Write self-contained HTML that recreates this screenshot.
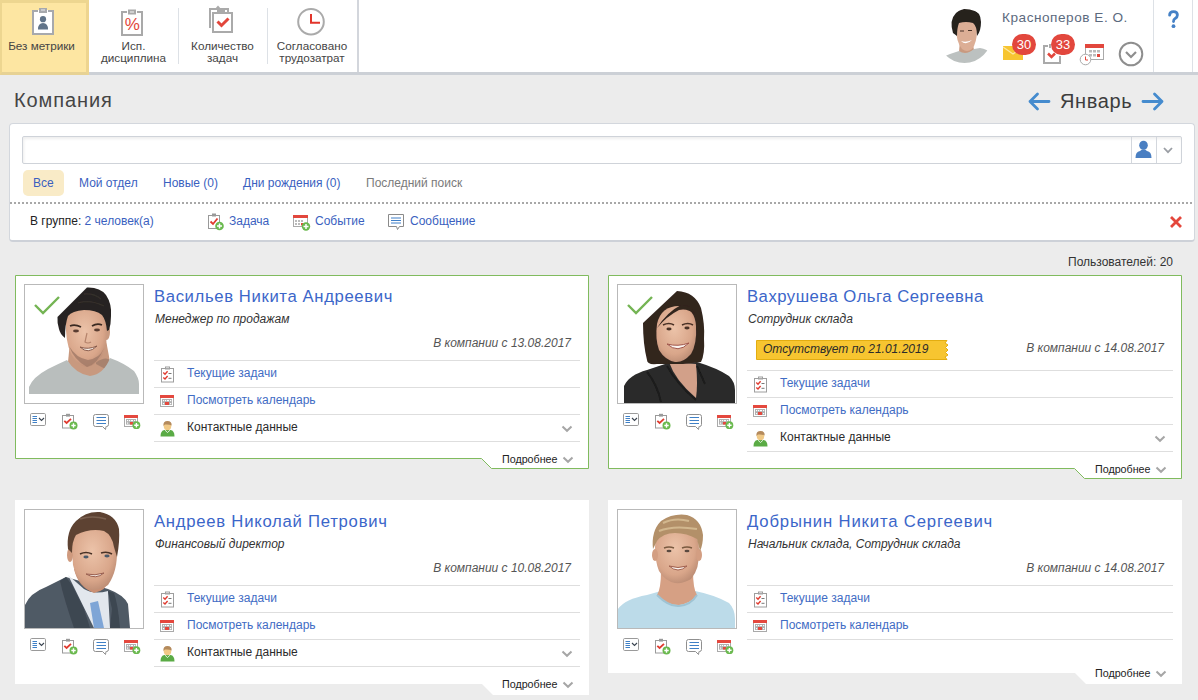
<!DOCTYPE html>
<html><head><meta charset="utf-8">
<style>
*{box-sizing:border-box;margin:0;padding:0}
html,body{width:1198px;height:700px;overflow:hidden;background:#ececec;font-family:"Liberation Sans",sans-serif;font-size:12px;color:#333}
.abs{position:absolute}
#top{position:absolute;left:0;top:0;width:1198px;height:72px;background:#fff}
#topline{position:absolute;left:0;top:72px;width:1198px;height:3px;background:#ccd0d6}
.tb{position:absolute;top:0;height:72px;text-align:center;font-size:11.7px;line-height:12px;color:#454545}
.tb .lbl{position:absolute;left:0;right:0;top:40px}
.sep{position:absolute;width:1px;background:#dde1e6}
a,.lnk{color:#3a5fc0;text-decoration:none}
</style></head><body>
<div id="top"></div>
<div id="topline"></div>
<!-- selected button -->
<div class="abs" style="left:0;top:0;width:89px;height:75px;background:#fde6a2;border-top:3px solid #edd690;border-left:2px solid #edd690;border-right:3px solid #eed590;border-bottom:3px solid #e7d294"></div>
<div class="tb" style="left:0;width:83px"><div class="lbl">Без метрики</div></div>
<div class="tb" style="left:89px;width:89px"><div class="lbl">Исп.<br>дисциплина</div></div>
<div class="sep" style="left:178px;top:8px;height:56px"></div>
<div class="tb" style="left:178px;width:89px"><div class="lbl">Количество<br>задач</div></div>
<div class="sep" style="left:267px;top:8px;height:56px"></div>
<div class="tb" style="left:267px;width:90px"><div class="lbl">Согласовано<br>трудозатрат</div></div>
<div class="abs" style="left:357px;top:0;width:2px;height:72px;background:#d3d6dc"></div>


<!-- toolbar icons -->
<svg class="abs" style="left:30px;top:6px" width="26" height="32" viewBox="0 0 26 32">
 <rect x="3" y="5" width="20" height="23" fill="#fff" stroke="#a7a9ad" stroke-width="2"/>
 <rect x="1" y="0" width="24" height="4" fill="none"/>
 <rect x="9" y="2" width="8" height="5" fill="#a7a9ad"/><rect x="11" y="3" width="4" height="2" fill="#c9cacd"/>
 <rect x="8" y="4" width="1" height="2" fill="#fff"/><rect x="17" y="4" width="1" height="2" fill="#fff"/>
 <circle cx="13" cy="13.2" r="3.1" fill="#617489"/>
 <path d="M8 23.5 Q8 17 13 17 Q18 17 18 23.5 Z" fill="#617489"/>
</svg>
<svg class="abs" style="left:119px;top:8px" width="26" height="30" viewBox="0 0 26 30">
 <rect x="3" y="4" width="20" height="23" fill="#fff" stroke="#a9a9a9" stroke-width="2"/>
 <rect x="8" y="3" width="10" height="2" fill="#fff"/><rect x="9" y="1.5" width="8" height="5" fill="#a9a9a9"/><rect x="11" y="3" width="4" height="2" fill="#d0d0d0"/>
 <text x="13.3" y="21.8" text-anchor="middle" font-family="Liberation Sans" font-size="17" fill="#e2463b">%</text>
</svg>
<svg class="abs" style="left:206px;top:4px" width="30" height="32" viewBox="0 0 30 32">
 <path d="M4 24 V5 H22 V8" fill="none" stroke="#aaa" stroke-width="2"/>
 <path d="M9 5 L12 1.5 L15 5 Z" fill="#aaa"/>
 <rect x="7" y="9" width="19" height="19" fill="#fff" stroke="#aaa" stroke-width="2"/>
 <rect x="11" y="6" width="8" height="4" fill="#aaa"/>
 <path d="M11.5 17.5 L15.5 21.5 L22.5 14.5" fill="none" stroke="#e2463b" stroke-width="3"/>
</svg>
<svg class="abs" style="left:296px;top:7px" width="30" height="30" viewBox="0 0 30 30">
 <circle cx="15" cy="14.7" r="12.8" fill="#fff" stroke="#aaa" stroke-width="2"/>
 <path d="M15 7 V15.7 H24" fill="none" stroke="#e2352b" stroke-width="2"/>
</svg>

<!-- right header -->

<!-- avatar -->
<svg class="abs" style="left:940px;top:6px" width="52" height="58" viewBox="0 0 52 58">
 <defs><clipPath id="avc"><circle cx="24.5" cy="30" r="27"/></clipPath><filter id="avb"><feGaussianBlur stdDeviation="0.5"/></filter></defs>
 <g clip-path="url(#avc)" filter="url(#avb)">
  <path d="M20 34 L19 46 Q26 50 34 44 L32 34 Z" fill="#c99a80"/>
  <path d="M0 58 Q2 50 10 48 L19 45 Q26 50 34 43 L40 42 Q47 43 52 48 V58 Z" fill="#bcc1c0"/>
  <path d="M16 21 Q16 12 26 12 Q37 12 37 23 Q37 37 32 43 Q27 47 22 43 Q16 36 16 21 Z" fill="#dcae95"/>
  <path d="M13 27 Q9 14 16 7 Q23 1 32 3 Q41 6 41 16 Q41 25 37 30 Q37 20 33 17 Q26 15 19 17 Q17 22 17 30 Z" fill="#25211f"/>
  <path d="M21 35 Q26 40 32 34 Q26 37 21 35 Z" fill="#fff"/>
  <path d="M20 25 L24 25 M28 24.5 L32 24.5" stroke="#4a3328" stroke-width="1.2"/>
 </g>
</svg>
<div class="abs" style="left:1002px;top:10px;font-size:13.6px;letter-spacing:0.53px;color:#5c6a7e">Красноперов Е. О.</div>
<!-- envelope -->
<svg class="abs" style="left:1003px;top:46px" width="21" height="14" viewBox="0 0 21 14">
 <rect x="0" y="0" width="20" height="14" fill="#f7c531"/>
 <path d="M0 1 L10 8 L20 1" fill="none" stroke="#fde8a0" stroke-width="1.2"/>
</svg>
<div class="abs" style="left:1012px;top:34px;width:24px;height:21px;border-radius:11px;background:#e2473d;color:#fff;font-size:13px;line-height:21px;text-align:center">30</div>
<!-- tasks icon -->
<svg class="abs" style="left:1043px;top:44px" width="20" height="20" viewBox="0 0 20 20">
 <path d="M5 2 H1 V19 H17 V12" fill="none" stroke="#aaa" stroke-width="2"/>
 <rect x="6" y="0" width="2" height="4" fill="#aaa"/>
 <path d="M5 9.5 L8.5 13 L12 9.5" fill="none" stroke="#e2473d" stroke-width="2.5"/>
</svg>
<div class="abs" style="left:1051px;top:34px;width:24px;height:21px;border-radius:11px;background:#e2473d;color:#fff;font-size:13px;line-height:21px;text-align:center">33</div>
<!-- calendar icon -->
<svg class="abs" style="left:1079px;top:43px" width="27" height="23" viewBox="0 0 27 23">
 <rect x="6.5" y="1.5" width="18" height="15" fill="#fff" stroke="#aaa" stroke-width="1"/>
 <rect x="6" y="1" width="19" height="4" fill="#e2473d"/>
 <g fill="#bbb"><rect x="10" y="7" width="3" height="2.5"/><rect x="14" y="7" width="3" height="2.5"/><rect x="18" y="7" width="3" height="2.5"/><rect x="10" y="11" width="3" height="2.5"/><rect x="14" y="11" width="3" height="2.5"/></g>
 <rect x="18" y="11" width="3" height="3" fill="#e2473d"/>
 <circle cx="6.5" cy="16.5" r="5.3" fill="#fff" stroke="#aaa" stroke-width="1"/>
 <path d="M6.5 13.5 V17 H9" fill="none" stroke="#e2473d" stroke-width="1"/>
</svg>
<!-- chevron circle -->
<svg class="abs" style="left:1118px;top:41px" width="26" height="26" viewBox="0 0 26 26">
 <circle cx="13" cy="13" r="11.3" fill="#fff" stroke="#8e8e8e" stroke-width="2"/>
 <path d="M8 11 L13 16 L18 11" fill="none" stroke="#8e8e8e" stroke-width="2.2"/>
</svg>

<div class="sep" style="left:1153px;top:0;height:72px"></div>
<div class="sep" style="left:1192px;top:0;height:72px"></div>
<svg class="abs" style="left:1167px;top:10px" width="13" height="20" viewBox="0 0 13 20"><path d="M2.6 5.2 Q2.6 1.6 6.5 1.6 Q10.4 1.6 10.4 5 Q10.4 7.2 8.2 8.4 Q6.5 9.4 6.5 11.6" fill="none" stroke="#4581c6" stroke-width="2.8" stroke-linecap="round"/><circle cx="6.5" cy="16.2" r="1.9" fill="#4581c6"/></svg>

<!-- title -->
<div class="abs" style="left:14px;top:88px;font-size:20px;letter-spacing:0.9px;color:#454545;line-height:24px">Компания</div>
<svg class="abs" style="left:1027px;top:91px" width="24" height="20" viewBox="0 0 24 20">
 <path d="M22 10.5 H3 M10.5 3 L3 10.5 L10.5 18" fill="none" stroke="#458bce" stroke-width="2.8" stroke-linecap="round" stroke-linejoin="round"/>
</svg>
<div class="abs" style="left:1060px;top:89px;font-size:20px;letter-spacing:0.6px;color:#3d3d3d;line-height:24px">Январь</div>
<svg class="abs" style="left:1141px;top:91px" width="24" height="20" viewBox="0 0 24 20">
 <path d="M2 10.5 H21 M13.5 3 L21 10.5 L13.5 18" fill="none" stroke="#458bce" stroke-width="2.8" stroke-linecap="round" stroke-linejoin="round"/>
</svg>

<!-- filter panel -->
<div class="abs" style="left:9px;top:123px;width:1186px;height:119px;background:#fff;border:1px solid #d3d7dd;border-bottom:2px solid #cdd1d8;border-radius:4px"></div>
<div class="abs" style="left:22px;top:136px;width:1160px;height:28px;background:#fff;border:1px solid #cfd3d9;border-radius:2px;box-shadow:inset 1px 2px 3px rgba(0,0,0,0.07)"></div>
<div class="abs" style="left:1131px;top:137px;width:1px;height:26px;background:#d3d7dd"></div>
<div class="abs" style="left:1156px;top:137px;width:1px;height:26px;background:#d3d7dd"></div>
<svg class="abs" style="left:1134px;top:140px" width="20" height="19" viewBox="0 0 20 19">
 <ellipse cx="9.5" cy="5.2" rx="4.3" ry="4.5" fill="#4a7fc2"/>
 <path d="M1.5 18 Q1.5 11.5 6 11 L8 9.5 H11 L13 11 Q17.5 11.5 17.5 18 Z" fill="#4a7fc2"/>
</svg>
<svg class="abs" style="left:1162px;top:146px" width="12" height="9" viewBox="0 0 12 9">
 <path d="M2 2 L6 6.2 L10 2" fill="none" stroke="#9a9ea4" stroke-width="1.8"/>
</svg>
<div class="abs" style="left:23px;top:170px;width:41px;height:26px;background:#f9ebc7;border-radius:5px"></div>
<div class="abs lnk" style="left:33px;top:176px;line-height:14px">Все</div>
<div class="abs lnk" style="left:79px;top:176px;line-height:14px">Мой отдел</div>
<div class="abs lnk" style="left:163px;top:176px;line-height:14px">Новые (0)</div>
<div class="abs lnk" style="left:243px;top:176px;line-height:14px">Дни рождения (0)</div>
<div class="abs" style="left:366px;top:176px;line-height:14px;color:#7a7a7a">Последний поиск</div>
<div class="abs" style="left:10px;top:202px;width:1184px;height:2px;background:repeating-linear-gradient(90deg,#a8a8a8 0 2px,transparent 2px 4px)"></div>

<div class="abs" style="left:30px;top:214px;line-height:14px;color:#222">В группе: <span class="lnk">2 человек(а)</span></div>
<svg class="abs" style="left:207px;top:212px" width="18" height="19" viewBox="0 0 18 19">
 <rect x="1.5" y="3.5" width="11" height="13" fill="#fff" stroke="#999" stroke-width="1"/>
 <rect x="5" y="1.5" width="4" height="3" fill="#999"/>
 <path d="M3.5 9.5 L6 12 L10.5 6.5" fill="none" stroke="#e03b30" stroke-width="1.8"/>
 <circle cx="12.5" cy="14" r="4.3" fill="#6ab94e"/>
 <path d="M12.5 11.5 V16.5 M10 14 H15" stroke="#fff" stroke-width="1.5"/>
</svg>
<div class="abs lnk" style="left:229px;top:214px;line-height:14px">Задача</div>
<svg class="abs" style="left:292px;top:214px" width="19" height="17" viewBox="0 0 19 17">
 <rect x="1.5" y="1.5" width="14" height="11" fill="#fff" stroke="#aaa" stroke-width="1"/>
 <rect x="1" y="1" width="15" height="3" fill="#e2473d"/>
 <g fill="#bbb"><rect x="3" y="6" width="2" height="2"/><rect x="6" y="6" width="2" height="2"/><rect x="9" y="6" width="2" height="2"/><rect x="3" y="9" width="2" height="2"/><rect x="6" y="9" width="2" height="2"/></g>
 <rect x="9" y="9" width="2.5" height="2.5" fill="#e2473d"/>
 <circle cx="14" cy="12.5" r="4.2" fill="#6ab94e"/>
 <path d="M14 10 V15 M11.5 12.5 H16.5" stroke="#fff" stroke-width="1.5"/>
</svg>
<div class="abs lnk" style="left:315px;top:214px;line-height:14px">Событие</div>
<svg class="abs" style="left:387px;top:213px" width="18" height="18" viewBox="0 0 18 18">
 <path d="M1.5 1.5 H16.5 V13.5 H12.5 L10.5 16.5 L9.5 13.5 H1.5 Z" fill="#fff" stroke="#8a8a8a" stroke-width="1"/>
 <path d="M4 5 H14 M4 7.5 H14 M4 10 H14" stroke="#3f7fc8" stroke-width="1"/>
</svg>
<div class="abs lnk" style="left:410px;top:214px;line-height:14px">Сообщение</div>
<svg class="abs" style="left:1169px;top:215px" width="14" height="14" viewBox="0 0 14 14">
 <path d="M2 2 L12 12 M12 2 L2 12" stroke="#e4473c" stroke-width="2.8"/>
</svg>

<div class="abs" style="left:1068px;top:255px;line-height:14px;color:#333">Пользователей: 20</div>


<!-- cards -->
<div class="abs" style="left:15px;top:275px;width:574px;height:194px"><svg class="abs" style="left:0;top:0" width="574" height="194"><polygon points="0.5,0.5 573.5,0.5 573.5,193.5 476.5,193.5 466.5,183.5 0.5,183.5" fill="#fff" stroke="#80bb5e" stroke-width="1"/></svg>
<div class="abs" style="left:9px;top:9px;width:120px;height:120px;border:1px solid #b9b9b9;background:#fff;overflow:hidden"><svg style="position:absolute;left:-1px;top:-1px" width="120" height="120" viewBox="0 0 120 120"><defs><filter id="bl1" x="-5%" y="-5%" width="110%" height="110%"><feGaussianBlur stdDeviation="0.7"/></filter><radialGradient id="fc1" cx="0.45" cy="0.4" r="0.65"><stop offset="0" stop-color="#ecc3a9"/><stop offset="0.7" stop-color="#d9a68a"/><stop offset="1" stop-color="#b98a72"/></radialGradient></defs><g filter="url(#bl1)">
<path d="M46 58 L44 78 Q52 93 66 94 Q80 92 86 78 L82 56 Z" fill="#c8997f"/>
<path d="M72 78 Q82 72 86 76 L86 86 Q78 84 72 80 Z" fill="#9a7766" opacity="0.7"/>
<path d="M5 110 V103 Q9 93 24 85 Q34 80 43 76 Q52 90 66 92 Q80 90 86 74 Q100 79 110 87 Q115 94 115 100 V110 Z" fill="#b9bebd"/>
<ellipse cx="82.5" cy="48" rx="3.5" ry="8" fill="#c99a80"/>
<path d="M42 36 Q43 24 61 24 Q80 25 83 40 Q84 58 78 72 Q70 83 63 83 Q53 82 47 70 Q41 56 42 36 Z" fill="url(#fc1)"/>
<path d="M45 62 Q50 76 63 83 Q74 80 80 64 Q76 74 64 76 Q52 74 45 62 Z" fill="#a37b68" opacity="0.85"/>
<path d="M33.5 33 L63 3.5 Q76 3 82 11 Q88 20 87 32 Q87 40 85 46 L83 47 Q82 36 78 31 Q72 26 60 26 Q48 27 44 32 Q41 40 41 54 Q36 50 35 45 Q33 39 33.5 33 Z" fill="#262220"/>
<path d="M60 10 Q70 9 77 15 M54 19 Q66 15 80 22" stroke="#35302c" stroke-width="1.3" fill="none"/>
<path d="M46 42 Q51 40 57 43 M68 42 Q73 39 78 41" stroke="#3a2a22" stroke-width="1.8" fill="none"/>
<ellipse cx="52" cy="47" rx="3" ry="1.4" fill="#5a3d30"/>
<ellipse cx="73" cy="46" rx="3" ry="1.4" fill="#5a3d30"/>
<path d="M56 63 Q64 71 73 62 Q64 66 56 63 Z" fill="#f4efe9" stroke="#8a5b4b" stroke-width="1"/>
<path d="M63 49 L61 58 Q64 60 67 58" stroke="#b5846c" stroke-width="1.2" fill="none"/>
</g></svg></div>
<svg class="abs" style="left:18px;top:20px" width="28" height="22" viewBox="0 0 28 22"><path d="M2 10 L10 18 L26 2" fill="none" stroke="#74b453" stroke-width="2.4"/></svg>
<svg class="abs" style="left:15px;top:138px" width="17" height="14" viewBox="0 0 17 14">
 <rect x="0.5" y="0.5" width="15" height="12" rx="1.2" fill="#fff" stroke="#9a9a9a" stroke-width="1"/>
 <path d="M2.5 3.5 H7 M2.5 5.5 H7 M2.5 7.5 H7 M2.5 9.5 H7" stroke="#3f80c6" stroke-width="1"/>
 <path d="M9 5 L11.5 7.5 L14 5" fill="none" stroke="#3a4450" stroke-width="1.1"/>
</svg>
<svg class="abs" style="left:46px;top:138px" width="17" height="17" viewBox="0 0 17 17">
 <rect x="1.5" y="2.5" width="11" height="12.5" fill="#fff" stroke="#9a9a9a" stroke-width="1"/>
 <rect x="5" y="0.8" width="4" height="2.8" fill="#9a9a9a"/>
 <path d="M3.3 7.8 L5.6 10 L10 5.8" fill="none" stroke="#e03b30" stroke-width="1.8"/>
 <circle cx="12.5" cy="12.5" r="4" fill="#6ab94e"/>
 <path d="M12.5 10.3 V14.7 M10.3 12.5 H14.7" stroke="#fff" stroke-width="1.4"/>
</svg>
<svg class="abs" style="left:78px;top:139px" width="17" height="17" viewBox="0 0 17 17">
 <path d="M2.5 0.5 H13.5 Q15.5 0.5 15.5 2.5 V10.5 Q15.5 12.5 13.5 12.5 H13 L12.5 15.5 L9.5 12.5 H2.5 Q0.5 12.5 0.5 10.5 V2.5 Q0.5 0.5 2.5 0.5 Z" fill="#fff" stroke="#8f8f8f" stroke-width="1"/>
 <path d="M3.5 3.5 H13 M3.5 6.5 H13 M3.5 9.5 H13" stroke="#3f80c6" stroke-width="1"/>
</svg>
<svg class="abs" style="left:109px;top:140px" width="18" height="16" viewBox="0 0 18 16">
 <rect x="0.5" y="0.5" width="13" height="11" fill="#fff" stroke="#aaa" stroke-width="1"/>
 <rect x="0" y="0" width="14" height="3" fill="#e4483e"/>
 <rect x="2" y="4" width="10" height="5.6" fill="#b0b0b0"/>
 <g fill="#fff"><rect x="3" y="5" width="1.2" height="1.2"/><rect x="5" y="5" width="1.2" height="1.2"/><rect x="7" y="5" width="2" height="1.2"/><rect x="10" y="5" width="1.2" height="1.2"/><rect x="3" y="7.5" width="1.2" height="1.2"/></g>
 <rect x="6" y="7" width="3" height="2.6" fill="#e4483e"/>
 <circle cx="12.4" cy="10.2" r="3.9" fill="#6ab94e"/>
 <path d="M12.4 8 V12.4 M10.2 10.2 H14.6" stroke="#fff" stroke-width="1.4"/>
</svg>
<div class="abs" style="left:139px;top:10px;font-size:16.7px;line-height:23px;letter-spacing:0.62px;color:#3b66c9;white-space:nowrap">Васильев Никита Андреевич</div>
<div class="abs" style="left:140px;top:37px;font-size:12px;line-height:14px;font-style:italic;color:#333;white-space:nowrap">Менеджер по продажам</div>
<div class="abs" style="right:18px;top:61px;font-size:12px;line-height:14px;font-style:italic;color:#555;white-space:nowrap">В компании с 13.08.2017</div>
<div class="abs" style="left:139px;top:85px;width:426px;height:1px;background:#dedede"></div>
<svg class="abs" style="left:145px;top:91px" width="15" height="17" viewBox="0 0 15 17">
 <rect x="1.5" y="2.5" width="12" height="13.5" fill="#fff" stroke="#9e9e9e" stroke-width="1"/>
 <rect x="5" y="0.5" width="5" height="3" fill="#9e9e9e"/><rect x="6" y="1.2" width="3" height="1" fill="#ddd"/>
 <path d="M3.3 6.6 L5 8.2 L7.6 5.2 M3.3 11.4 L5 13 L7.6 10" fill="none" stroke="#e03b30" stroke-width="1.4"/>
 <path d="M8.5 7.5 H11.5 M8.5 12.3 H11.5" stroke="#777" stroke-width="1"/>
</svg>
<div class="abs" style="left:172px;top:91px;font-size:12px;line-height:14px;color:#3f6cc4;white-space:nowrap">Текущие задачи</div>
<div class="abs" style="left:139px;top:112px;width:426px;height:1px;background:#dedede"></div>
<svg class="abs" style="left:145px;top:120px" width="14" height="12" viewBox="0 0 14 12">
 <rect x="0.5" y="0.5" width="13" height="11" fill="#fff" stroke="#aaa" stroke-width="1"/>
 <rect x="0" y="0" width="14" height="3" fill="#e4483e"/>
 <rect x="2" y="4" width="10" height="6" fill="#b0b0b0"/>
 <g fill="#fff"><rect x="3" y="5" width="1.2" height="1.2"/><rect x="5" y="5" width="1.2" height="1.2"/><rect x="7" y="5" width="2" height="1.2"/><rect x="10" y="5" width="1.2" height="1.2"/><rect x="3" y="8" width="1.2" height="1.2"/><rect x="10" y="8" width="1.2" height="1.2"/></g>
 <rect x="5" y="7" width="4" height="3" fill="#e4483e"/>
</svg>
<div class="abs" style="left:172px;top:118px;font-size:12px;line-height:14px;color:#3f6cc4;white-space:nowrap">Посмотреть календарь</div>
<div class="abs" style="left:139px;top:139px;width:426px;height:1px;background:#dedede"></div>
<svg class="abs" style="left:145px;top:145px" width="15" height="17" viewBox="0 0 15 17">
 <path d="M0.5 16.5 Q0.5 10.5 4.5 10 H10.5 Q14.5 10.5 14.5 16.5 Z" fill="#5aab45"/>
 <path d="M5 10.2 L7.5 12.5 L10 10.2" fill="none" stroke="#fff" stroke-width="0.8"/>
 <ellipse cx="7.5" cy="6" rx="3.8" ry="4.2" fill="#f0c986"/>
 <path d="M3.4 6 Q3 1 7.5 1 Q12 1 11.6 5.5 Q9 4 5 4.5 Q4 5 3.4 6Z" fill="#b48a5c"/>
</svg>
<div class="abs" style="left:172px;top:145px;font-size:12px;line-height:14px;color:#2b2b2b;white-space:nowrap">Контактные данные</div>
<svg class="abs" style="left:546px;top:150px" width="12" height="8" viewBox="0 0 12 8"><path d="M1.5 1.5 L6 5.8 L10.5 1.5" fill="none" stroke="#a6a6a6" stroke-width="2"/></svg>
<div class="abs" style="left:139px;top:166px;width:426px;height:1px;background:#dedede"></div>
<div class="abs" style="left:487px;top:178px;font-size:10.7px;line-height:13px;color:#222;white-space:nowrap">Подробнее</div>
<svg class="abs" style="left:547px;top:181px" width="12" height="8" viewBox="0 0 12 8"><path d="M1.5 1.5 L6 5.8 L10.5 1.5" fill="none" stroke="#a6a6a6" stroke-width="2"/></svg></div><div class="abs" style="left:608px;top:275px;width:574px;height:204px"><svg class="abs" style="left:0;top:0" width="574" height="204"><polygon points="0.5,0.5 573.5,0.5 573.5,203.5 476.5,203.5 466.5,193.5 0.5,193.5" fill="#fff" stroke="#80bb5e" stroke-width="1"/></svg>
<div class="abs" style="left:9px;top:9px;width:120px;height:120px;border:1px solid #b9b9b9;background:#fff;overflow:hidden"><svg style="position:absolute;left:-1px;top:-1px" width="120" height="120" viewBox="0 0 120 120"><defs><filter id="bl2" x="-5%" y="-5%" width="110%" height="110%"><feGaussianBlur stdDeviation="0.7"/></filter><radialGradient id="fc2" cx="0.45" cy="0.4" r="0.65"><stop offset="0" stop-color="#ecc3a9"/><stop offset="0.7" stop-color="#d9a68a"/><stop offset="1" stop-color="#b98a72"/></radialGradient></defs><g filter="url(#bl2)">
<path d="M7 119 V102 Q12 91 30 86 L48 80 L80 78 Q100 84 112 92 Q118 98 118 106 V119 Z" fill="#2c2c2b"/>
<path d="M52 78 Q58 96 79 114 Q81 100 79 80 Z" fill="#d2a089"/>
<path d="M50 82 Q60 100 79 116 M80 82 L88 100 M30 88 Q40 100 44 118" stroke="#1a1a1a" stroke-width="2" fill="none"/>
<path d="M26 39 L60 7 Q78 8 84 24 Q88 40 87 55 Q88 70 84 78 L66 80 L40 80 Q30 81 30 76 Q26 60 26 39 Z" fill="#33251f"/>
<path d="M40 40 Q44 22 62 22 Q78 24 79 42 Q80 60 74 70 Q66 79 58 78 Q48 76 42 66 Q38 55 40 40 Z" fill="url(#fc2)"/>
<path d="M40 44 Q50 28 64 21 Q74 20 78 30 Q70 24 62 26 Q50 32 40 44 Z" fill="#33251f"/>
<path d="M46 41 Q52 38 57 41 M65 41 Q71 38 76 41" stroke="#4a3025" stroke-width="1.6" fill="none"/>
<ellipse cx="52" cy="45" rx="2.6" ry="1.4" fill="#4a3025"/>
<ellipse cx="70" cy="44" rx="2.6" ry="1.4" fill="#4a3025"/>
<path d="M50 60 Q61 70 72 59 Q61 63 50 60 Z" fill="#fbf5f0" stroke="#a0554a" stroke-width="1"/>
</g></svg></div>
<svg class="abs" style="left:18px;top:20px" width="28" height="22" viewBox="0 0 28 22"><path d="M2 10 L10 18 L26 2" fill="none" stroke="#74b453" stroke-width="2.4"/></svg>
<svg class="abs" style="left:15px;top:138px" width="17" height="14" viewBox="0 0 17 14">
 <rect x="0.5" y="0.5" width="15" height="12" rx="1.2" fill="#fff" stroke="#9a9a9a" stroke-width="1"/>
 <path d="M2.5 3.5 H7 M2.5 5.5 H7 M2.5 7.5 H7 M2.5 9.5 H7" stroke="#3f80c6" stroke-width="1"/>
 <path d="M9 5 L11.5 7.5 L14 5" fill="none" stroke="#3a4450" stroke-width="1.1"/>
</svg>
<svg class="abs" style="left:46px;top:138px" width="17" height="17" viewBox="0 0 17 17">
 <rect x="1.5" y="2.5" width="11" height="12.5" fill="#fff" stroke="#9a9a9a" stroke-width="1"/>
 <rect x="5" y="0.8" width="4" height="2.8" fill="#9a9a9a"/>
 <path d="M3.3 7.8 L5.6 10 L10 5.8" fill="none" stroke="#e03b30" stroke-width="1.8"/>
 <circle cx="12.5" cy="12.5" r="4" fill="#6ab94e"/>
 <path d="M12.5 10.3 V14.7 M10.3 12.5 H14.7" stroke="#fff" stroke-width="1.4"/>
</svg>
<svg class="abs" style="left:78px;top:139px" width="17" height="17" viewBox="0 0 17 17">
 <path d="M2.5 0.5 H13.5 Q15.5 0.5 15.5 2.5 V10.5 Q15.5 12.5 13.5 12.5 H13 L12.5 15.5 L9.5 12.5 H2.5 Q0.5 12.5 0.5 10.5 V2.5 Q0.5 0.5 2.5 0.5 Z" fill="#fff" stroke="#8f8f8f" stroke-width="1"/>
 <path d="M3.5 3.5 H13 M3.5 6.5 H13 M3.5 9.5 H13" stroke="#3f80c6" stroke-width="1"/>
</svg>
<svg class="abs" style="left:109px;top:140px" width="18" height="16" viewBox="0 0 18 16">
 <rect x="0.5" y="0.5" width="13" height="11" fill="#fff" stroke="#aaa" stroke-width="1"/>
 <rect x="0" y="0" width="14" height="3" fill="#e4483e"/>
 <rect x="2" y="4" width="10" height="5.6" fill="#b0b0b0"/>
 <g fill="#fff"><rect x="3" y="5" width="1.2" height="1.2"/><rect x="5" y="5" width="1.2" height="1.2"/><rect x="7" y="5" width="2" height="1.2"/><rect x="10" y="5" width="1.2" height="1.2"/><rect x="3" y="7.5" width="1.2" height="1.2"/></g>
 <rect x="6" y="7" width="3" height="2.6" fill="#e4483e"/>
 <circle cx="12.4" cy="10.2" r="3.9" fill="#6ab94e"/>
 <path d="M12.4 8 V12.4 M10.2 10.2 H14.6" stroke="#fff" stroke-width="1.4"/>
</svg>
<div class="abs" style="left:139px;top:10px;font-size:16.7px;line-height:23px;letter-spacing:0.49px;color:#3b66c9;white-space:nowrap">Вахрушева Ольга Сергеевна</div>
<div class="abs" style="left:140px;top:37px;font-size:12px;line-height:14px;font-style:italic;color:#333;white-space:nowrap">Сотрудник склада</div>
<svg class="abs" style="left:148px;top:65px" width="194" height="20" viewBox="0 0 194 20">
 <path d="M0.5 0.5 H191 L189 3 L192 5 L189.5 7.5 L192 10 L189.5 12.5 L192 15 L189 17 L191 19.5 H0.5 Z" fill="#f7c530" stroke="#e3ad10" stroke-width="1"/>
</svg>
<div class="abs" style="left:155px;top:67px;font-size:12px;line-height:14px;font-style:italic;color:#2b2b2b;white-space:nowrap">Отсутствует по 21.01.2019</div>
<div class="abs" style="right:18px;top:66px;font-size:12px;line-height:14px;font-style:italic;color:#555;white-space:nowrap">В компании с 14.08.2017</div>
<div class="abs" style="left:139px;top:95px;width:426px;height:1px;background:#dedede"></div>
<svg class="abs" style="left:145px;top:101px" width="15" height="17" viewBox="0 0 15 17">
 <rect x="1.5" y="2.5" width="12" height="13.5" fill="#fff" stroke="#9e9e9e" stroke-width="1"/>
 <rect x="5" y="0.5" width="5" height="3" fill="#9e9e9e"/><rect x="6" y="1.2" width="3" height="1" fill="#ddd"/>
 <path d="M3.3 6.6 L5 8.2 L7.6 5.2 M3.3 11.4 L5 13 L7.6 10" fill="none" stroke="#e03b30" stroke-width="1.4"/>
 <path d="M8.5 7.5 H11.5 M8.5 12.3 H11.5" stroke="#777" stroke-width="1"/>
</svg>
<div class="abs" style="left:172px;top:101px;font-size:12px;line-height:14px;color:#3f6cc4;white-space:nowrap">Текущие задачи</div>
<div class="abs" style="left:139px;top:122px;width:426px;height:1px;background:#dedede"></div>
<svg class="abs" style="left:145px;top:130px" width="14" height="12" viewBox="0 0 14 12">
 <rect x="0.5" y="0.5" width="13" height="11" fill="#fff" stroke="#aaa" stroke-width="1"/>
 <rect x="0" y="0" width="14" height="3" fill="#e4483e"/>
 <rect x="2" y="4" width="10" height="6" fill="#b0b0b0"/>
 <g fill="#fff"><rect x="3" y="5" width="1.2" height="1.2"/><rect x="5" y="5" width="1.2" height="1.2"/><rect x="7" y="5" width="2" height="1.2"/><rect x="10" y="5" width="1.2" height="1.2"/><rect x="3" y="8" width="1.2" height="1.2"/><rect x="10" y="8" width="1.2" height="1.2"/></g>
 <rect x="5" y="7" width="4" height="3" fill="#e4483e"/>
</svg>
<div class="abs" style="left:172px;top:128px;font-size:12px;line-height:14px;color:#3f6cc4;white-space:nowrap">Посмотреть календарь</div>
<div class="abs" style="left:139px;top:149px;width:426px;height:1px;background:#dedede"></div>
<svg class="abs" style="left:145px;top:155px" width="15" height="17" viewBox="0 0 15 17">
 <path d="M0.5 16.5 Q0.5 10.5 4.5 10 H10.5 Q14.5 10.5 14.5 16.5 Z" fill="#5aab45"/>
 <path d="M5 10.2 L7.5 12.5 L10 10.2" fill="none" stroke="#fff" stroke-width="0.8"/>
 <ellipse cx="7.5" cy="6" rx="3.8" ry="4.2" fill="#f0c986"/>
 <path d="M3.4 6 Q3 1 7.5 1 Q12 1 11.6 5.5 Q9 4 5 4.5 Q4 5 3.4 6Z" fill="#b48a5c"/>
</svg>
<div class="abs" style="left:172px;top:155px;font-size:12px;line-height:14px;color:#2b2b2b;white-space:nowrap">Контактные данные</div>
<svg class="abs" style="left:546px;top:160px" width="12" height="8" viewBox="0 0 12 8"><path d="M1.5 1.5 L6 5.8 L10.5 1.5" fill="none" stroke="#a6a6a6" stroke-width="2"/></svg>
<div class="abs" style="left:139px;top:176px;width:426px;height:1px;background:#dedede"></div>
<div class="abs" style="left:487px;top:188px;font-size:10.7px;line-height:13px;color:#222;white-space:nowrap">Подробнее</div>
<svg class="abs" style="left:547px;top:191px" width="12" height="8" viewBox="0 0 12 8"><path d="M1.5 1.5 L6 5.8 L10.5 1.5" fill="none" stroke="#a6a6a6" stroke-width="2"/></svg></div><div class="abs" style="left:15px;top:500px;width:574px;height:194px"><svg class="abs" style="left:0;top:0" width="574" height="195"><polygon points="0,0 574,0 574,195 478,195 467,184 0,184" fill="#fff"/></svg>
<div class="abs" style="left:9px;top:9px;width:120px;height:120px;border:1px solid #b9b9b9;background:#fff;overflow:hidden"><svg style="position:absolute;left:-1px;top:-1px" width="120" height="120" viewBox="0 0 120 120"><defs><filter id="bl3" x="-5%" y="-5%" width="110%" height="110%"><feGaussianBlur stdDeviation="0.7"/></filter><radialGradient id="fc3" cx="0.45" cy="0.4" r="0.65"><stop offset="0" stop-color="#ecc3a9"/><stop offset="0.7" stop-color="#d9a68a"/><stop offset="1" stop-color="#b98a72"/></radialGradient></defs><g filter="url(#bl3)">
<path d="M1 119 V96 Q6 84 22 78 L42 68 L84 80 Q100 86 104 95 L106 119 Z" fill="#505a65"/>
<path d="M44 66 L70 119 L86 119 L84 82 Q70 86 60 80 Z" fill="#e2e7ed"/>
<path d="M66 94 L74 92 L80 119 L70 119 Z" fill="#7ea5d6"/>
<path d="M42 68 L48 76 L60 100 L66 119 L50 119 Q40 90 36 72 Z" fill="#3d4651"/>
<path d="M84 82 L88 100 L86 119 L96 119 Q94 95 90 84 Z" fill="#3d4651"/>
<path d="M50 60 Q54 78 70 84 Q82 82 86 70 L82 58 Z" fill="#c98f73"/>
<path d="M48 40 Q47 18 68 16 Q92 16 93 38 Q94 62 84 76 Q74 83 64 80 Q53 74 49 56 Z" fill="url(#fc3)"/>
<ellipse cx="46" cy="46" rx="3" ry="7" fill="#cf9a7e"/>
<path d="M44 40 Q42 22 52 12 Q62 2 76 3 Q92 6 95 20 Q96 32 93 48 L90 38 Q88 26 80 22 Q66 19 52 26 Q48 32 48 44 Z" fill="#5d4333"/>
<path d="M56 10 Q68 6 82 10" stroke="#7a6050" stroke-width="1.5" fill="none"/>
<path d="M56 45 Q62 42 68 45 M77 44 Q83 42 88 45" stroke="#4a3328" stroke-width="1.6" fill="none"/>
<ellipse cx="62" cy="48" rx="2.6" ry="1.4" fill="#4b5a6a"/>
<ellipse cx="83" cy="47" rx="2.6" ry="1.4" fill="#4b5a6a"/>
<path d="M62 65 Q72 71 80 64 Q71 67 62 65 Z" fill="#f3e8e2" stroke="#9a5f4f" stroke-width="1"/>
</g></svg></div>
<svg class="abs" style="left:15px;top:138px" width="17" height="14" viewBox="0 0 17 14">
 <rect x="0.5" y="0.5" width="15" height="12" rx="1.2" fill="#fff" stroke="#9a9a9a" stroke-width="1"/>
 <path d="M2.5 3.5 H7 M2.5 5.5 H7 M2.5 7.5 H7 M2.5 9.5 H7" stroke="#3f80c6" stroke-width="1"/>
 <path d="M9 5 L11.5 7.5 L14 5" fill="none" stroke="#3a4450" stroke-width="1.1"/>
</svg>
<svg class="abs" style="left:46px;top:138px" width="17" height="17" viewBox="0 0 17 17">
 <rect x="1.5" y="2.5" width="11" height="12.5" fill="#fff" stroke="#9a9a9a" stroke-width="1"/>
 <rect x="5" y="0.8" width="4" height="2.8" fill="#9a9a9a"/>
 <path d="M3.3 7.8 L5.6 10 L10 5.8" fill="none" stroke="#e03b30" stroke-width="1.8"/>
 <circle cx="12.5" cy="12.5" r="4" fill="#6ab94e"/>
 <path d="M12.5 10.3 V14.7 M10.3 12.5 H14.7" stroke="#fff" stroke-width="1.4"/>
</svg>
<svg class="abs" style="left:78px;top:139px" width="17" height="17" viewBox="0 0 17 17">
 <path d="M2.5 0.5 H13.5 Q15.5 0.5 15.5 2.5 V10.5 Q15.5 12.5 13.5 12.5 H13 L12.5 15.5 L9.5 12.5 H2.5 Q0.5 12.5 0.5 10.5 V2.5 Q0.5 0.5 2.5 0.5 Z" fill="#fff" stroke="#8f8f8f" stroke-width="1"/>
 <path d="M3.5 3.5 H13 M3.5 6.5 H13 M3.5 9.5 H13" stroke="#3f80c6" stroke-width="1"/>
</svg>
<svg class="abs" style="left:109px;top:140px" width="18" height="16" viewBox="0 0 18 16">
 <rect x="0.5" y="0.5" width="13" height="11" fill="#fff" stroke="#aaa" stroke-width="1"/>
 <rect x="0" y="0" width="14" height="3" fill="#e4483e"/>
 <rect x="2" y="4" width="10" height="5.6" fill="#b0b0b0"/>
 <g fill="#fff"><rect x="3" y="5" width="1.2" height="1.2"/><rect x="5" y="5" width="1.2" height="1.2"/><rect x="7" y="5" width="2" height="1.2"/><rect x="10" y="5" width="1.2" height="1.2"/><rect x="3" y="7.5" width="1.2" height="1.2"/></g>
 <rect x="6" y="7" width="3" height="2.6" fill="#e4483e"/>
 <circle cx="12.4" cy="10.2" r="3.9" fill="#6ab94e"/>
 <path d="M12.4 8 V12.4 M10.2 10.2 H14.6" stroke="#fff" stroke-width="1.4"/>
</svg>
<div class="abs" style="left:139px;top:10px;font-size:16.7px;line-height:23px;letter-spacing:0.74px;color:#3b66c9;white-space:nowrap">Андреев Николай Петрович</div>
<div class="abs" style="left:140px;top:37px;font-size:12px;line-height:14px;font-style:italic;color:#333;white-space:nowrap">Финансовый директор</div>
<div class="abs" style="right:18px;top:61px;font-size:12px;line-height:14px;font-style:italic;color:#555;white-space:nowrap">В компании с 10.08.2017</div>
<div class="abs" style="left:139px;top:85px;width:426px;height:1px;background:#dedede"></div>
<svg class="abs" style="left:145px;top:91px" width="15" height="17" viewBox="0 0 15 17">
 <rect x="1.5" y="2.5" width="12" height="13.5" fill="#fff" stroke="#9e9e9e" stroke-width="1"/>
 <rect x="5" y="0.5" width="5" height="3" fill="#9e9e9e"/><rect x="6" y="1.2" width="3" height="1" fill="#ddd"/>
 <path d="M3.3 6.6 L5 8.2 L7.6 5.2 M3.3 11.4 L5 13 L7.6 10" fill="none" stroke="#e03b30" stroke-width="1.4"/>
 <path d="M8.5 7.5 H11.5 M8.5 12.3 H11.5" stroke="#777" stroke-width="1"/>
</svg>
<div class="abs" style="left:172px;top:91px;font-size:12px;line-height:14px;color:#3f6cc4;white-space:nowrap">Текущие задачи</div>
<div class="abs" style="left:139px;top:112px;width:426px;height:1px;background:#dedede"></div>
<svg class="abs" style="left:145px;top:120px" width="14" height="12" viewBox="0 0 14 12">
 <rect x="0.5" y="0.5" width="13" height="11" fill="#fff" stroke="#aaa" stroke-width="1"/>
 <rect x="0" y="0" width="14" height="3" fill="#e4483e"/>
 <rect x="2" y="4" width="10" height="6" fill="#b0b0b0"/>
 <g fill="#fff"><rect x="3" y="5" width="1.2" height="1.2"/><rect x="5" y="5" width="1.2" height="1.2"/><rect x="7" y="5" width="2" height="1.2"/><rect x="10" y="5" width="1.2" height="1.2"/><rect x="3" y="8" width="1.2" height="1.2"/><rect x="10" y="8" width="1.2" height="1.2"/></g>
 <rect x="5" y="7" width="4" height="3" fill="#e4483e"/>
</svg>
<div class="abs" style="left:172px;top:118px;font-size:12px;line-height:14px;color:#3f6cc4;white-space:nowrap">Посмотреть календарь</div>
<div class="abs" style="left:139px;top:139px;width:426px;height:1px;background:#dedede"></div>
<svg class="abs" style="left:145px;top:145px" width="15" height="17" viewBox="0 0 15 17">
 <path d="M0.5 16.5 Q0.5 10.5 4.5 10 H10.5 Q14.5 10.5 14.5 16.5 Z" fill="#5aab45"/>
 <path d="M5 10.2 L7.5 12.5 L10 10.2" fill="none" stroke="#fff" stroke-width="0.8"/>
 <ellipse cx="7.5" cy="6" rx="3.8" ry="4.2" fill="#f0c986"/>
 <path d="M3.4 6 Q3 1 7.5 1 Q12 1 11.6 5.5 Q9 4 5 4.5 Q4 5 3.4 6Z" fill="#b48a5c"/>
</svg>
<div class="abs" style="left:172px;top:145px;font-size:12px;line-height:14px;color:#2b2b2b;white-space:nowrap">Контактные данные</div>
<svg class="abs" style="left:546px;top:150px" width="12" height="8" viewBox="0 0 12 8"><path d="M1.5 1.5 L6 5.8 L10.5 1.5" fill="none" stroke="#a6a6a6" stroke-width="2"/></svg>
<div class="abs" style="left:139px;top:166px;width:426px;height:1px;background:#dedede"></div>
<div class="abs" style="left:487px;top:178px;font-size:10.7px;line-height:13px;color:#222;white-space:nowrap">Подробнее</div>
<svg class="abs" style="left:547px;top:181px" width="12" height="8" viewBox="0 0 12 8"><path d="M1.5 1.5 L6 5.8 L10.5 1.5" fill="none" stroke="#a6a6a6" stroke-width="2"/></svg></div><div class="abs" style="left:608px;top:500px;width:574px;height:183px"><svg class="abs" style="left:0;top:0" width="574" height="184"><polygon points="0,0 574,0 574,184 478,184 467,173 0,173" fill="#fff"/></svg>
<div class="abs" style="left:9px;top:9px;width:120px;height:120px;border:1px solid #b9b9b9;background:#fff;overflow:hidden"><svg style="position:absolute;left:-1px;top:-1px" width="120" height="120" viewBox="0 0 120 120"><defs><filter id="bl4" x="-5%" y="-5%" width="110%" height="110%"><feGaussianBlur stdDeviation="0.7"/></filter><radialGradient id="fc4" cx="0.45" cy="0.4" r="0.65"><stop offset="0" stop-color="#ecc3a9"/><stop offset="0.7" stop-color="#d9a68a"/><stop offset="1" stop-color="#b98a72"/></radialGradient></defs><g filter="url(#bl4)">
<path d="M1 119 V100 Q8 90 30 86 L44 82 L78 82 Q98 86 112 94 Q118 100 118 110 V119 Z" fill="#bcdbe9"/>
<path d="M44 62 Q44 80 40 86 Q50 96 62 96 Q74 94 80 86 Q76 80 76 62 Z" fill="#d6a084"/>
<path d="M40 86 Q52 98 62 97 Q74 96 80 86" stroke="#9fc3d3" stroke-width="2" fill="none"/>
<path d="M38 38 Q38 18 60 16 Q82 18 82 40 Q83 60 74 70 Q66 75 58 74 Q48 72 42 62 Q38 52 38 38 Z" fill="url(#fc4)"/>
<ellipse cx="38" cy="46" rx="3" ry="6" fill="#d39e82"/>
<ellipse cx="82" cy="46" rx="3" ry="6" fill="#d39e82"/>
<path d="M36 40 Q34 22 44 12 Q56 4 70 6 Q84 10 86 26 Q86 36 83 42 L80 30 Q70 24 58 24 Q46 24 40 32 Z" fill="#b39069"/>
<path d="M46 14 Q58 8 72 12 M42 22 Q56 16 80 20" stroke="#d2b78e" stroke-width="2" fill="none"/>
<path d="M47 39 Q52 37 57 39 M65 39 Q70 37 75 39" stroke="#7a5a40" stroke-width="1.4" fill="none"/>
<ellipse cx="52" cy="42" rx="2.5" ry="1.3" fill="#5a4a40"/>
<ellipse cx="70" cy="42" rx="2.5" ry="1.3" fill="#5a4a40"/>
<path d="M52 57 Q61 65 70 57 Q61 60 52 57 Z" fill="#fbf5f0" stroke="#a0604e" stroke-width="1"/>
</g></svg></div>
<svg class="abs" style="left:15px;top:138px" width="17" height="14" viewBox="0 0 17 14">
 <rect x="0.5" y="0.5" width="15" height="12" rx="1.2" fill="#fff" stroke="#9a9a9a" stroke-width="1"/>
 <path d="M2.5 3.5 H7 M2.5 5.5 H7 M2.5 7.5 H7 M2.5 9.5 H7" stroke="#3f80c6" stroke-width="1"/>
 <path d="M9 5 L11.5 7.5 L14 5" fill="none" stroke="#3a4450" stroke-width="1.1"/>
</svg>
<svg class="abs" style="left:46px;top:138px" width="17" height="17" viewBox="0 0 17 17">
 <rect x="1.5" y="2.5" width="11" height="12.5" fill="#fff" stroke="#9a9a9a" stroke-width="1"/>
 <rect x="5" y="0.8" width="4" height="2.8" fill="#9a9a9a"/>
 <path d="M3.3 7.8 L5.6 10 L10 5.8" fill="none" stroke="#e03b30" stroke-width="1.8"/>
 <circle cx="12.5" cy="12.5" r="4" fill="#6ab94e"/>
 <path d="M12.5 10.3 V14.7 M10.3 12.5 H14.7" stroke="#fff" stroke-width="1.4"/>
</svg>
<svg class="abs" style="left:78px;top:139px" width="17" height="17" viewBox="0 0 17 17">
 <path d="M2.5 0.5 H13.5 Q15.5 0.5 15.5 2.5 V10.5 Q15.5 12.5 13.5 12.5 H13 L12.5 15.5 L9.5 12.5 H2.5 Q0.5 12.5 0.5 10.5 V2.5 Q0.5 0.5 2.5 0.5 Z" fill="#fff" stroke="#8f8f8f" stroke-width="1"/>
 <path d="M3.5 3.5 H13 M3.5 6.5 H13 M3.5 9.5 H13" stroke="#3f80c6" stroke-width="1"/>
</svg>
<svg class="abs" style="left:109px;top:140px" width="18" height="16" viewBox="0 0 18 16">
 <rect x="0.5" y="0.5" width="13" height="11" fill="#fff" stroke="#aaa" stroke-width="1"/>
 <rect x="0" y="0" width="14" height="3" fill="#e4483e"/>
 <rect x="2" y="4" width="10" height="5.6" fill="#b0b0b0"/>
 <g fill="#fff"><rect x="3" y="5" width="1.2" height="1.2"/><rect x="5" y="5" width="1.2" height="1.2"/><rect x="7" y="5" width="2" height="1.2"/><rect x="10" y="5" width="1.2" height="1.2"/><rect x="3" y="7.5" width="1.2" height="1.2"/></g>
 <rect x="6" y="7" width="3" height="2.6" fill="#e4483e"/>
 <circle cx="12.4" cy="10.2" r="3.9" fill="#6ab94e"/>
 <path d="M12.4 8 V12.4 M10.2 10.2 H14.6" stroke="#fff" stroke-width="1.4"/>
</svg>
<div class="abs" style="left:139px;top:10px;font-size:16.7px;line-height:23px;letter-spacing:0.84px;color:#3b66c9;white-space:nowrap">Добрынин Никита Сергеевич</div>
<div class="abs" style="left:140px;top:37px;font-size:12px;line-height:14px;font-style:italic;color:#333;white-space:nowrap">Начальник склада, Сотрудник склада</div>
<div class="abs" style="right:18px;top:61px;font-size:12px;line-height:14px;font-style:italic;color:#555;white-space:nowrap">В компании с 14.08.2017</div>
<div class="abs" style="left:139px;top:85px;width:426px;height:1px;background:#dedede"></div>
<svg class="abs" style="left:145px;top:91px" width="15" height="17" viewBox="0 0 15 17">
 <rect x="1.5" y="2.5" width="12" height="13.5" fill="#fff" stroke="#9e9e9e" stroke-width="1"/>
 <rect x="5" y="0.5" width="5" height="3" fill="#9e9e9e"/><rect x="6" y="1.2" width="3" height="1" fill="#ddd"/>
 <path d="M3.3 6.6 L5 8.2 L7.6 5.2 M3.3 11.4 L5 13 L7.6 10" fill="none" stroke="#e03b30" stroke-width="1.4"/>
 <path d="M8.5 7.5 H11.5 M8.5 12.3 H11.5" stroke="#777" stroke-width="1"/>
</svg>
<div class="abs" style="left:172px;top:91px;font-size:12px;line-height:14px;color:#3f6cc4;white-space:nowrap">Текущие задачи</div>
<div class="abs" style="left:139px;top:112px;width:426px;height:1px;background:#dedede"></div>
<svg class="abs" style="left:145px;top:120px" width="14" height="12" viewBox="0 0 14 12">
 <rect x="0.5" y="0.5" width="13" height="11" fill="#fff" stroke="#aaa" stroke-width="1"/>
 <rect x="0" y="0" width="14" height="3" fill="#e4483e"/>
 <rect x="2" y="4" width="10" height="6" fill="#b0b0b0"/>
 <g fill="#fff"><rect x="3" y="5" width="1.2" height="1.2"/><rect x="5" y="5" width="1.2" height="1.2"/><rect x="7" y="5" width="2" height="1.2"/><rect x="10" y="5" width="1.2" height="1.2"/><rect x="3" y="8" width="1.2" height="1.2"/><rect x="10" y="8" width="1.2" height="1.2"/></g>
 <rect x="5" y="7" width="4" height="3" fill="#e4483e"/>
</svg>
<div class="abs" style="left:172px;top:118px;font-size:12px;line-height:14px;color:#3f6cc4;white-space:nowrap">Посмотреть календарь</div>
<div class="abs" style="left:139px;top:139px;width:426px;height:1px;background:#dedede"></div>
<div class="abs" style="left:487px;top:167px;font-size:10.7px;line-height:13px;color:#222;white-space:nowrap">Подробнее</div>
<svg class="abs" style="left:547px;top:170px" width="12" height="8" viewBox="0 0 12 8"><path d="M1.5 1.5 L6 5.8 L10.5 1.5" fill="none" stroke="#a6a6a6" stroke-width="2"/></svg></div>
<!-- /cards -->
</body></html>
